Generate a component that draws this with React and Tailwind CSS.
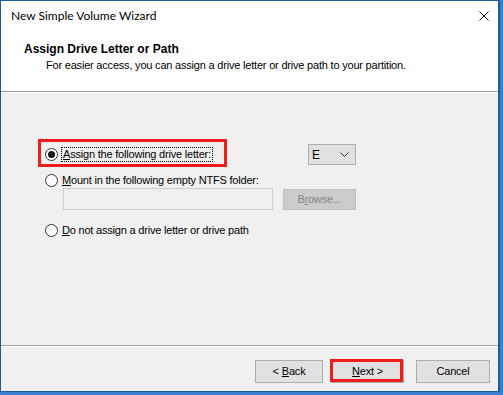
import React from "react";

const font = { fontFamily: '"Liberation Sans", Arial, sans-serif' };
const titleFont = { fontFamily: 'Lato, "Liberation Sans", Arial, sans-serif' };

function Radio({ checked }) {
  return (
    <span className="flex h-[13px] w-[13px] shrink-0 items-center justify-center rounded-full border border-[#333333] bg-white">
      {checked && <span className="h-[7px] w-[7px] rounded-full bg-[#1a1a1a]" />}
    </span>
  );
}

function Button({ children, className = "" }) {
  return (
    <div
      className={`flex h-[23px] items-center justify-center border border-[#adadad] bg-[#e1e1e1] text-[11px] tracking-[-0.2px] text-black ${className}`}
    >
      {children}
    </div>
  );
}

export default function App() {
  return (
    <div className="h-[395px] w-[503px] overflow-hidden bg-[#3b80cf]" style={font}>
      <div className="flex h-[392px] w-[500px] flex-col border border-[#1c5aa6] border-r-2 bg-[#f0f0f0]">
        {/* title bar */}
        <div className="flex h-[30px] items-center justify-between bg-white pl-[10px] pr-[9px]">
          <span className="whitespace-nowrap text-[12px] text-black" style={titleFont}>
            New Simple Volume Wizard
          </span>
          <svg width="10" height="10" viewBox="0 0 10 10">
            <path d="M0.5 0.5 L9.5 9.5 M9.5 0.5 L0.5 9.5" stroke="#111" strokeWidth="1" />
          </svg>
        </div>

        {/* header */}
        <div className="flex h-[60px] flex-col bg-white pl-[23px] pt-[10px]">
          <span className="whitespace-nowrap text-[12px] font-bold leading-[16px] text-black">
            Assign Drive Letter or Path
          </span>
          <span className="whitespace-nowrap pl-[22px] text-[11px] leading-[16px] tracking-[-0.2px] text-black">
            For easier access, you can assign a drive letter or drive path to your partition.
          </span>
        </div>
        <div className="h-px bg-[#a0a0a0]" />
        <div className="h-px bg-white" />

        {/* body */}
        <div className="flex flex-1 flex-col whitespace-nowrap pl-[44px] pt-[51px] text-[11px] tracking-[-0.2px] text-black">
          <div className="flex h-[21px] items-center">
            <div className="relative flex items-center gap-[3px]">
              <div className="absolute -left-[7px] -top-[8px] h-[28px] w-[189px] border-[3px] border-[#f01c1c]" />
              <Radio checked />
              <span className="border border-dotted border-black px-px leading-[13px]">
                <span className="underline">A</span>ssign the following drive letter:
              </span>
            </div>
            <div className="ml-auto mr-[142px] flex h-[21px] w-[48px] items-center justify-between border border-[#adadad] bg-[#e1e1e1] pl-[3px] pr-[6px] text-[12px]">
              <span>E</span>
              <svg width="9" height="6" viewBox="0 0 9 6">
                <path d="M0.5 0.5 L4.5 4.5 L8.5 0.5" fill="none" stroke="#333" strokeWidth="1" />
              </svg>
            </div>
          </div>

          <div className="mt-[7px] flex h-[16px] items-center gap-[3px]">
            <Radio />
            <span className="pl-px">
              <span className="underline">M</span>ount in the following empty NTFS folder:
            </span>
          </div>
          <div className="flex items-center gap-[10px] pl-[18px]">
            <div className="h-[22px] w-[210px] border border-[#cccccc] bg-[#f0f0f0]" />
            <div className="flex h-[21px] w-[73px] items-center justify-center border border-[#bfbfbf] bg-[#cccccc] text-[#838383]">
              B<span className="underline">r</span>owse...
            </div>
          </div>

          <div className="mt-[12px] flex h-[16px] items-center gap-[3px]">
            <Radio />
            <span className="pl-px">
              <span className="underline">D</span>o not assign a drive letter or drive path
            </span>
          </div>
        </div>

        {/* footer */}
        <div className="h-px bg-[#a0a0a0]" />
        <div className="h-px bg-white" />
        <div className="flex h-[44px] items-start pl-[254px] pt-[13px]">
          <Button className="w-[68px]">
            &lt; <span className="ml-[3px] underline">B</span>ack
          </Button>
          <div className="relative ml-[8px]">
            <Button className="w-[73px] border-[#0078d7]">
              <span className="underline">N</span>ext &gt;
            </Button>
            <div className="absolute -left-[1px] -top-[1px] h-[23px] w-[73px] border-[3px] border-[#f01c1c]" />
          </div>
          <Button className="ml-[12px] w-[74px]">Cancel</Button>
        </div>
      </div>
    </div>
  );
}
